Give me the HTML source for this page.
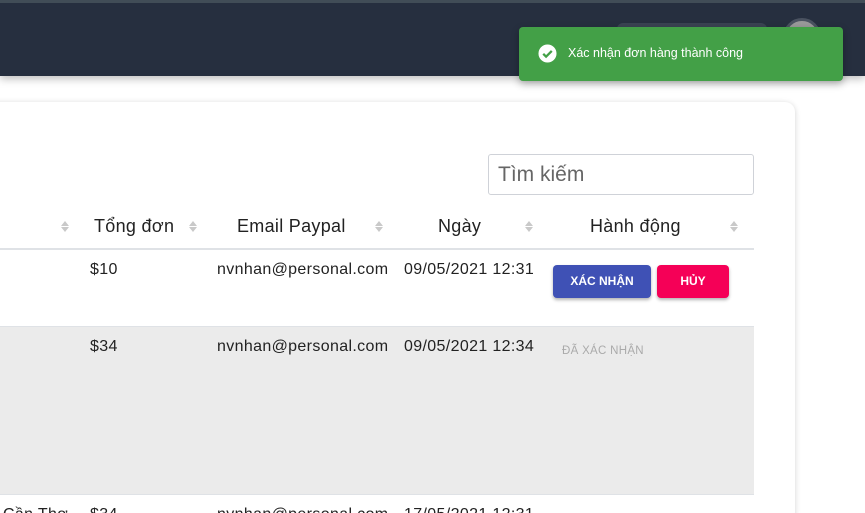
<!DOCTYPE html>
<html><head><meta charset="utf-8"><style>
*{margin:0;padding:0;box-sizing:border-box}
html,body{width:865px;height:513px;overflow:hidden}
body{background:#fff;font-family:"Liberation Sans",Roboto,sans-serif;position:relative;color:#222}
.hdr{position:absolute;left:0;top:0;width:865px;height:76px;background:#262f3f;border-top:3px solid #414d57;box-shadow:0 3px 8px rgba(0,0,0,.25)}
.pill{position:absolute;left:617px;top:20px;width:150px;height:30px;background:#3a4352;border-radius:6px}
.av{position:absolute;left:783px;top:15px;width:38px;height:38px;border-radius:50%;background:#9a9a9a;border:3px solid #4a5260}
.card{position:absolute;left:-20px;top:102px;width:815px;height:420px;background:#fff;border-radius:10px;box-shadow:0 1px 6px rgba(0,0,0,.18)}
.search{position:absolute;left:488px;top:154px;width:266px;height:41px;border:1px solid #cfd2d8;border-radius:3px;font-size:21px;color:#666;padding:8px 9px}
.th{position:absolute;top:216px;font-size:18px;color:#222;letter-spacing:.3px}
.sort{position:absolute;top:221px;width:8px;height:12px}
.sort:before{content:"";position:absolute;left:0;top:0;border:4px solid transparent;border-bottom:5px solid #c9c9c9;border-top:0}
.sort:after{content:"";position:absolute;left:0;top:6px;border:4px solid transparent;border-top:5px solid #c9c9c9;border-bottom:0}
.line{position:absolute;left:0;width:754px}
.td{position:absolute;font-size:16px;color:#222;letter-spacing:.35px}
.btn{position:absolute;top:265px;height:33px;border-radius:4px;color:#fff;font-weight:bold;font-size:12px;text-align:center;line-height:33px;box-shadow:0 2px 3px rgba(0,0,0,.3)}
.toast{position:absolute;left:519px;top:27px;width:324px;height:54px;background:#43a047;border-radius:4px;box-shadow:0 3px 8px rgba(0,0,0,.3);color:#fff;font-size:12.5px}
</style></head><body>
<div class="hdr"><div class="pill"></div><div class="av"></div></div>
<div class="card"></div>
<div class="search">Tìm kiếm</div>
<div class="sort" style="left:61px"></div>
<div class="th" style="left:94px">Tổng đơn</div><div class="sort" style="left:189px"></div>
<div class="th" style="left:237px">Email Paypal</div><div class="sort" style="left:375px"></div>
<div class="th" style="left:438px">Ngày</div><div class="sort" style="left:525px"></div>
<div class="th" style="left:590px">Hành động</div><div class="sort" style="left:730px"></div>
<div class="line" style="top:248px;height:2px;background:#dfe2e6"></div>
<div class="line" style="top:326px;height:169px;background:#ebebeb;border-top:1px solid #dfe2e6;border-bottom:1px solid #dfe2e6"></div>
<div class="td" style="left:90px;top:261px">$10</div>
<div class="td" style="left:217px;top:261px">nvnhan@personal.com</div>
<div class="td" style="left:404px;top:261px">09/05/2021 12:31</div>
<div class="btn" style="left:553px;width:98px;background:#3f51b5">XÁC NHẬN</div>
<div class="btn" style="left:657px;width:72px;background:#f50057">HỦY</div>
<div class="td" style="left:90px;top:338px">$34</div>
<div class="td" style="left:217px;top:338px">nvnhan@personal.com</div>
<div class="td" style="left:404px;top:338px">09/05/2021 12:34</div>
<div class="td" style="left:562px;top:345px;font-size:11.5px;color:#aaa;letter-spacing:.3px">ĐÃ XÁC NHẬN</div>
<div class="td" style="left:3px;top:506px">Cần Thơ</div>
<div class="td" style="left:90px;top:506px">$34</div>
<div class="td" style="left:217px;top:506px">nvnhan@personal.com</div>
<div class="td" style="left:404px;top:506px">17/05/2021 12:31</div>
<div class="toast">
<svg style="position:absolute;left:19px;top:17px" width="19" height="19" viewBox="0 0 20 20"><circle cx="10" cy="10" r="9.5" fill="#fff"/><path d="M5.5 10.3l3 3 6-6" stroke="#43a047" stroke-width="2.4" fill="none"/></svg>
<span style="position:absolute;left:49px;top:19px">Xác nhận đơn hàng thành công</span></div>
</body></html>
